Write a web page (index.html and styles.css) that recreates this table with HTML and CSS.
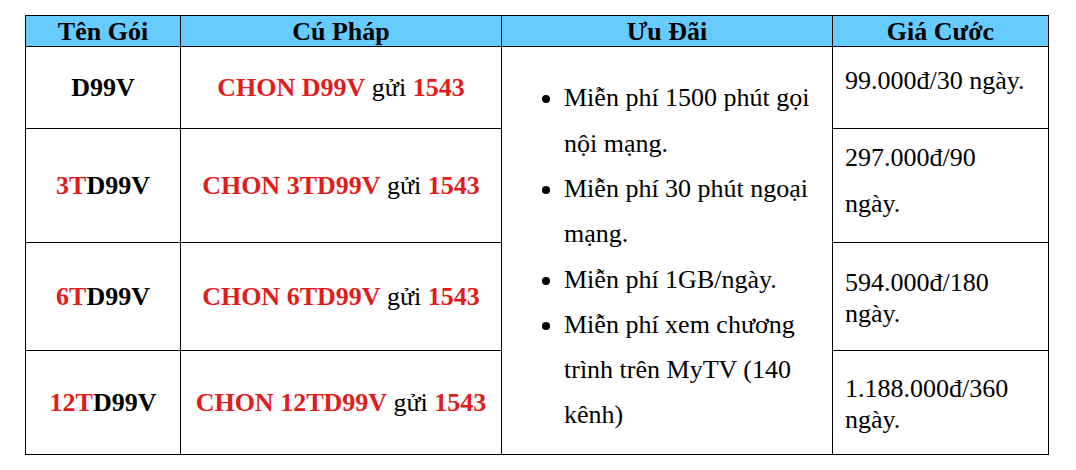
FILE: index.html
```html
<!DOCTYPE html>
<html lang="vi">
<head>
<meta charset="utf-8">
<title>Gói cước D99V</title>
<link rel="stylesheet" href="styles.css">
</head>
<body>
<table class="plans">
  <colgroup>
    <col class="c-name">
    <col class="c-syntax">
    <col class="c-offer">
    <col class="c-price">
  </colgroup>
  <thead>
    <tr class="head">
      <th>Tên Gói</th>
      <th>Cú Pháp</th>
      <th>Ưu Đãi</th>
      <th>Giá Cước</th>
    </tr>
  </thead>
  <tbody>
    <tr class="r1">
      <td class="name">D99V</td>
      <td class="syntax"><b class="red">CHON D99V</b> gửi <b class="red">1543</b></td>
      <td class="offer" rowspan="4">
        <ul class="offers">
          <li>Miễn phí 1500 phút gọi nội mạng.</li>
          <li>Miễn phí 30 phút ngoại mạng.</li>
          <li>Miễn phí 1GB/ngày.</li>
          <li>Miễn phí xem chương trình trên MyTV (140 kênh)</li>
        </ul>
      </td>
      <td class="price price-r1">99.000đ/30 ngày.</td>
    </tr>
    <tr class="r2">
      <td class="name"><span class="red">3T</span>D99V</td>
      <td class="syntax"><b class="red">CHON 3TD99V</b> gửi <b class="red">1543</b></td>
      <td class="price price-tall">297.000đ/90<br>ngày.</td>
    </tr>
    <tr class="r3">
      <td class="name"><span class="red">6T</span>D99V</td>
      <td class="syntax"><b class="red">CHON 6TD99V</b> gửi <b class="red">1543</b></td>
      <td class="price price-tight">594.000đ/180<br>ngày.</td>
    </tr>
    <tr class="r4">
      <td class="name"><span class="red">12T</span>D99V</td>
      <td class="syntax"><b class="red">CHON 12TD99V</b> gửi <b class="red">1543</b></td>
      <td class="price price-tight">1.188.000đ/360<br>ngày.</td>
    </tr>
  </tbody>
</table>
</body>
</html>
```

FILE: styles.css
```css
html, body {
  margin: 0;
  padding: 0;
  background: #ffffff;
}

body {
  padding: 15px 0 0 25px;
  font-family: "Liberation Serif", "Times New Roman", serif;
  color: #000;
}

.plans {
  border-collapse: collapse;
  table-layout: fixed;
  width: 1023px;
  font-size: 26px;
}

.c-name { width: 155px; }
.c-syntax { width: 321px; }
.c-offer { width: 331px; }
.c-price { width: 216px; }

.plans th,
.plans td {
  border: 1px solid #000;
  padding: 0;
}

.head { height: 31px; }
.r1 { height: 82px; }
.r2 { height: 114px; }
.r3 { height: 108px; }
.r4 { height: 104px; }

.head th {
  background: #66ccff;
  font-weight: bold;
  text-align: center;
  line-height: 29px;
}

.name {
  text-align: center;
  font-weight: bold;
  vertical-align: middle;
}

.syntax {
  text-align: center;
  vertical-align: middle;
}

.red {
  color: #e21b1b;
}

.plans .offer {
  vertical-align: middle;
  padding-top: 12px;
}

.offers {
  margin: 0;
  padding: 0 0 0 62px;
  line-height: 45.3px;
  list-style: disc;
}

.offers li {
  padding-right: 18px;
}

.plans .price {
  vertical-align: middle;
  padding: 0 10px 0 12px;
}

.plans .price-r1 {
  line-height: 46px;
  padding-bottom: 14px;
}

.plans .price-tall {
  line-height: 46px;
  padding-bottom: 10px;
}

.plans .price-tight {
  line-height: 31px;
  padding-top: 2px;
}
```
